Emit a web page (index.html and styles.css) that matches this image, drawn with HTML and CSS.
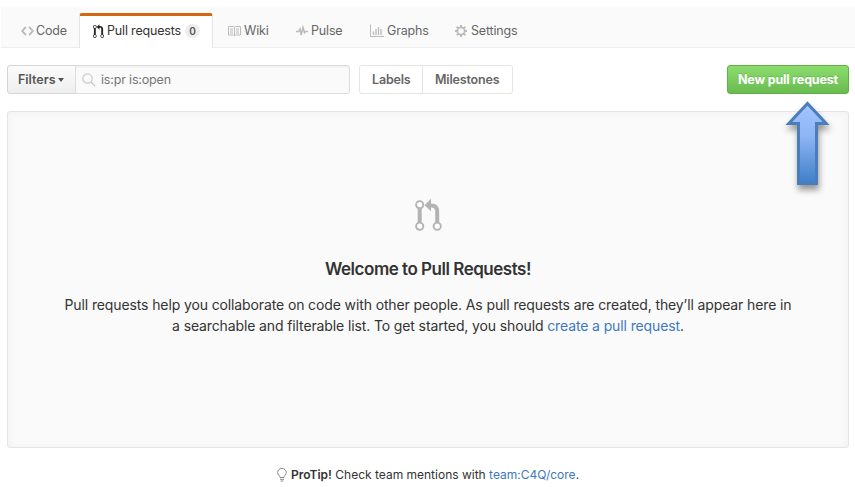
FILE: index.html
```html
<!DOCTYPE html>
<html lang="en">
<head>
<meta charset="utf-8">
<title>Pull Requests</title>
<link rel="stylesheet" href="styles.css">
</head>
<body>
<nav class="tabs">
  <a class="tab code"><svg width="13" height="16" viewBox="0 0 14 16"><path d="M9.5 3L8 4.5 11.5 8 8 11.5 9.5 13 14 8 9.500 3zm-5 0L0 8l4.500 5L6 11.500 2.500 8 6 4.500 4.500 3z"/></svg><span>Code</span></a>
  <a class="tab selected"><svg width="11" height="15" viewBox="0 0 12 16"><path d="M11 11.280V5c-.03-.78-.34-1.470-.94-2.060C9.460 2.350 8.780 2.030 8 2H7V0L4 3l3 3V4h1c.27.02.48.11.69.31.21.2.3.42.31.69v6.280A1.993 1.993 0 0 0 10 15a1.993 1.993 0 0 0 1-3.720zm-1 2.920c-.66 0-1.200-.55-1.200-1.200 0-.65.55-1.200 1.200-1.200.65 0 1.200.55 1.200 1.200 0 .65-.55 1.200-1.200 1.200zM4 3c0-1.110-.89-2-2-2a1.993 1.993 0 0 0-1 3.720v6.560A1.993 1.993 0 0 0 2 15a1.993 1.993 0 0 0 1-3.720V4.720c.59-.34 1-.98 1-1.720zm-.8 10c0 .66-.55 1.200-1.200 1.200-.65 0-1.200-.55-1.200-1.200 0-.65.55-1.200 1.200-1.200.65 0 1.200.55 1.200 1.200zM2 4.200C1.340 4.200.8 3.650.8 3c0-.65.55-1.200 1.200-1.200.65 0 1.200.55 1.200 1.200 0 .65-.55 1.200-1.200 1.200z"/></svg><span>Pull requests</span><b class="count">0</b></a>
  <a class="tab wiki"><svg width="13" height="12" viewBox="0 0 13 12" class="line"><path d="M.5 1.500h5.200l.8.700.800-.7h5.200v8.500H7.300l-.8.800-.8-.8H.5zM6.500 2.200v8.500M2 4h3M2 6h3M2 8h3M8 4h3M8 6h3M8 8h3"/></svg><span>Wiki</span></a>
  <a class="tab pulse"><svg width="12" height="14" viewBox="0 0 12 14" class="line heavy"><path d="M0 7.500h2.600L4 5l1.200 6L7 3.500l1.500 5.200 1-1.200H12"/></svg><span>Pulse</span></a>
  <a class="tab graphs"><svg width="14" height="14" viewBox="0 0 14 14" class="line"><path d="M.5.500v12H14"/><path class="bars" d="M3.500 11V7.500M6 11V5M8.500 11V3M11 11V5"/></svg><span>Graphs</span></a>
  <a class="tab settings"><svg width="12" height="12" viewBox="0 0 12 12" class="line"><circle class="ring" cx="6" cy="6" r="3.700"/><path class="teeth" d="M6 0v2M6 10v2M0 6h2M10 6h2M1.750 1.750l1.400 1.400M8.850 8.850l1.400 1.400M10.250 1.750l-1.400 1.400M3.150 8.850l-1.400 1.400"/></svg><span>Settings</span></a>
</nav>
<main>
  <div class="toolbar">
    <button class="filters"><span>Filters</span><i class="caret"></i></button>
    <div class="search"><svg width="14" height="14" viewBox="0 0 14 14"><circle cx="5.500" cy="5.500" r="4.700"/><path d="M9 9l4.200 4.200"/></svg><span>is:pr is:open</span></div>
    <div class="group"><a class="labels"><span>Labels</span></a><a class="milestones"><span>Milestones</span></a></div>
    <button class="new"><span>New pull request</span></button>
  </div>
  <section class="blank">
    <svg class="hero" width="27" height="33" viewBox="0 0 27 33"><path class="shaft" d="M4.700 10v16M22.200 25V13.500q0-6-6-6h-1"/><path class="head" d="M9.500 7.200L16 .8v12.400z"/><circle cx="4.700" cy="6.700" r="3.600"/><circle cx="4.700" cy="28.200" r="3.600"/><circle cx="22.200" cy="28.200" r="3.600"/></svg>
    <h1><span>Welcome to Pull Requests!</span></h1>
    <p><span class="l1">Pull requests help you collaborate on code with other people. As pull requests are created, they’ll appear here in</span><br><span class="l2">a searchable and filterable list. To get started, you should <a>create a pull request</a>.</span></p>
  </section>
  <footer><svg width="10" height="14" viewBox="0 0 10 14"><path d="M3 9.500C3 7.500.6 7 .6 4.500a4.300 4 0 0 1 8.700 0C9.300 7 7 7.500 7 9.500zM3 11.300h4M3.700 13h2.600"/></svg><span><b>ProTip!</b> Check team mentions with <a>team:C4Q/core</a>.</span></footer>
</main>
<svg class="arrow" width="56" height="100" viewBox="0 0 56 100">
  <defs><linearGradient id="blue" x1="0" y1="0" x2="0" y2="1"><stop offset="0" stop-color="#a3c4ff"/><stop offset=".4" stop-color="#8fb5f4"/><stop offset="1" stop-color="#3d7fc9"/></linearGradient></defs>
  <path d="M27.500 3.500L46.200 23.500H36.500V83.500H18.500V23.500H8.800z" fill="url(#blue)" stroke="#4a7ebb" stroke-width="3"/>
</svg>
</body>
</html>
```

FILE: styles.css
```css
* { box-sizing: border-box; }
body { margin: 0; height: 487px; overflow: hidden; position: relative; background: #fff; color: #333; font: 13px/20px Inter, "Liberation Sans", sans-serif; }
svg { display: block; flex: none; }
span { white-space: nowrap; }
a { color: #4078c0; }
.tabs, .toolbar { font-size: 12.5px; letter-spacing: -.17px; }
.tabs { height: 41px; margin: 7px 0 0 1px; padding: 6px 0 0 7px; display: flex; background: #fafafa; border-bottom: 1px solid #eee; }
.tab { height: 35px; display: flex; align-items: center; color: #666; padding: 0 0 0 13px; }
.tab svg { fill: #bbb; margin-right: 2px; }
.tab .line { fill: none; stroke: #bbb; stroke-width: 1; }
.tab .heavy { stroke-width: 1.5; }
.line .bars, .line .ring { stroke-width: 1.8; }
.line .bars { stroke-width: 1.3; }
.line .teeth { stroke-width: 2; }
.code { width: 71px; }
.selected { width: 134px; background: #fff; color: #333; border: 1px solid #e5e5e5; border-top: 3px solid #d26911; border-bottom: 0; border-radius: 3px 3px 0 0; padding: 0 0 2px 13px; }
.selected svg { fill: #222; margin-right: 3px; }
.count { margin-left: 4px; width: 15px; height: 14px; border-radius: 8px; background: #eee; font-size: 10px; line-height: 14px; font-weight: 600; color: #555; text-align: center; }
.wiki { width: 69px; padding-left: 15px; }
.wiki svg, .pulse svg { margin-right: 3px; }
.pulse { width: 73px; padding-left: 14px; }
.graphs { width: 86px; padding-left: 15px; }
.graphs svg { margin-right: 3px; }
.settings { padding-left: 14px; }
.settings svg { margin-right: 4px; }
main { margin: 0 6px 0 7px; }
.toolbar { display: flex; height: 29px; margin-top: 17px; }
button { font: inherit; letter-spacing: inherit; }
.filters { width: 69px; height: 29px; padding: 0 0 0 10px; display: flex; align-items: center; border: 1px solid #d5d5d5; border-radius: 3px 0 0 3px; background: linear-gradient(#fcfcfc, #eee); color: #555; font-weight: 600; letter-spacing: 0; }
.caret { margin-left: 2px; border: 3.500px solid transparent; border-top: 4px solid #555; border-bottom: 0; }
.search { width: 275px; height: 29px; margin-left: -1px; padding-left: 6px; display: flex; align-items: center; border: 1px solid #ddd; border-radius: 0 3px 3px 0; background: #fafafa; box-shadow: inset 0 1px 2px rgba(0,0,0,.06); color: #777; }
.search svg { fill: none; stroke: #ccc; stroke-width: 1.300; margin-right: 5px; }
.group { display: flex; width: 154px; height: 29px; margin-left: 9px; border: 1px solid #e5e5e5; border-radius: 3px; font-weight: 600; line-height: 27px; }
.group a { color: #666; padding-left: 12px; }
.labels { width: 63px; border-right: 1px solid #e5e5e5; }
.new { width: 122px; height: 29px; margin-left: auto; padding: 0 0 0 10px; text-align: left; border: 1px solid #60b044; border-radius: 3px; background: linear-gradient(#8add6d, #6abb50); color: #fff; font-weight: 700; text-shadow: 0 -1px rgba(0,0,0,.12); }
.blank { height: 337px; margin-top: 17px; padding-top: 86px; background: #fafafa; border: 1px solid #e5e5e5; border-radius: 3px; box-shadow: inset 0 0 10px rgba(0,0,0,.04); text-align: center; }
.hero { margin: 0 auto; fill: #fff; stroke: #b3b3b3; stroke-width: 1.900; }
.hero .shaft { fill: none; stroke-width: 4; }
.hero .head { fill: #b3b3b3; stroke: none; }
h1 { margin: 26px 0 0; font-size: 17px; line-height: 24px; font-weight: 600; letter-spacing: -.48px; }
p { margin: 13px 0 0; font-size: 14px; line-height: 21px; letter-spacing: -.12px; }
footer { display: flex; justify-content: center; align-items: center; margin-top: 17px; height: 20px; font-size: 12px; }
footer svg { margin-right: 4px; fill: none; stroke: #888; stroke-width: 1; }
footer b { font-weight: 600; }
.arrow { position: absolute; left: 780px; top: 100px; overflow: visible; filter: drop-shadow(1px 5px 3px rgba(0,0,0,.4)); }
```
